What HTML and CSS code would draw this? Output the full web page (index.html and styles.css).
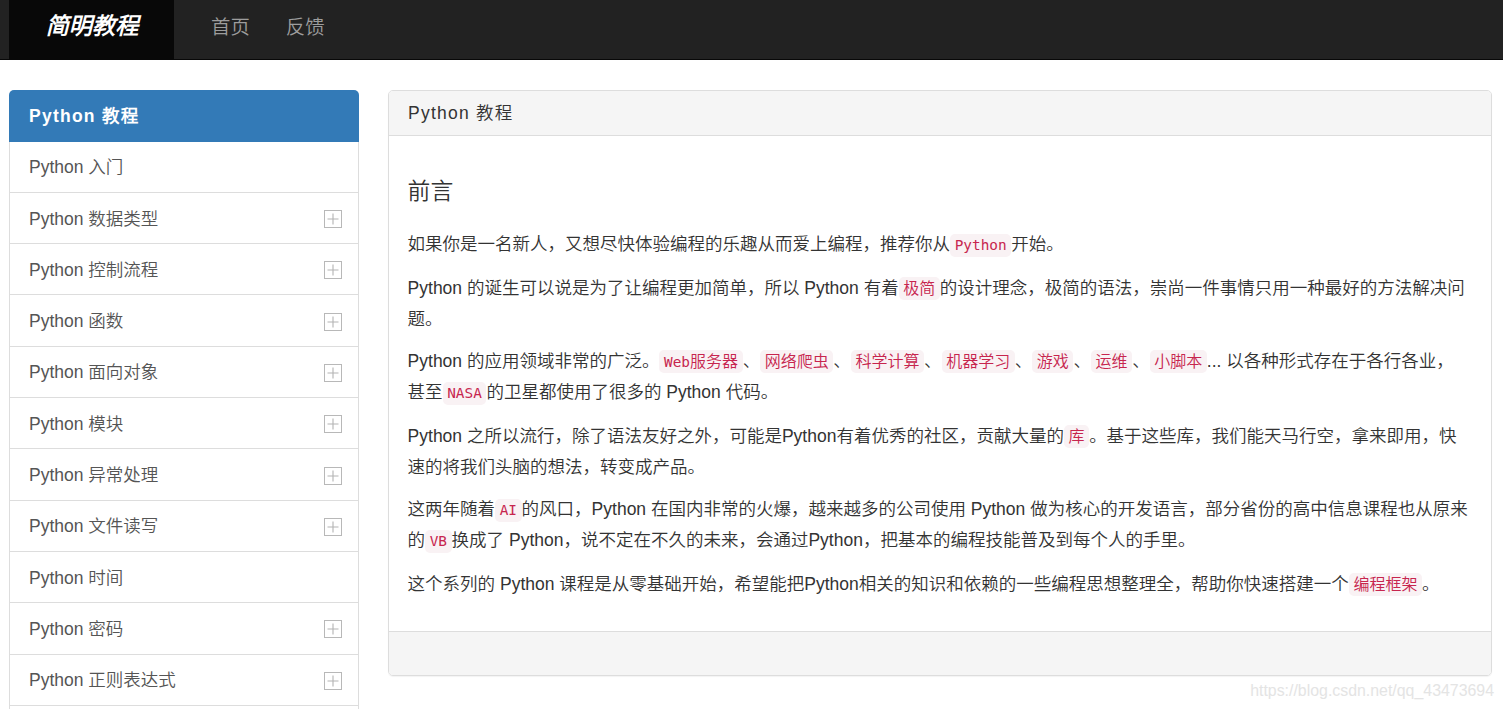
FILE: index.html
```
<!DOCTYPE html>
<html lang="zh-CN">

<head>
    <meta charset="UTF-8">
    <meta name="viewport" content="width=device-width, initial-scale=1.0">
    <title>Python 教程 - 简明教程</title>
    <link rel="stylesheet" href="styles.css">
</head>

<body>
    <svg class="symbols">
        <symbol id="plus" viewBox="0 0 18 18">
            <rect x="0.5" y="0.5" width="17" height="17" fill="none" stroke="#b8b8b8" />
            <path d="M3.5 9H14.5M9 3.5V14.5" fill="none" stroke="#b3b3b3" stroke-width="1.1" />
        </symbol>
    </svg>

    <nav class="navbar">
        <a class="brand">简明教程</a>
        <a class="nav-link">首页</a>
        <a class="nav-link">反馈</a>
    </nav>

    <div class="container">
        <div class="sidebar">
            <div class="item active">Python 教程</div>
            <div class="item">Python 入门</div>
            <div class="item">Python 数据类型<svg class="icon"><use href="#plus" /></svg></div>
            <div class="item">Python 控制流程<svg class="icon"><use href="#plus" /></svg></div>
            <div class="item">Python 函数<svg class="icon"><use href="#plus" /></svg></div>
            <div class="item">Python 面向对象<svg class="icon"><use href="#plus" /></svg></div>
            <div class="item">Python 模块<svg class="icon"><use href="#plus" /></svg></div>
            <div class="item">Python 异常处理<svg class="icon"><use href="#plus" /></svg></div>
            <div class="item">Python 文件读写<svg class="icon"><use href="#plus" /></svg></div>
            <div class="item">Python 时间</div>
            <div class="item">Python 密码<svg class="icon"><use href="#plus" /></svg></div>
            <div class="item">Python 正则表达式<svg class="icon"><use href="#plus" /></svg></div>
            <div class="item last"></div>
        </div>

        <div class="panel">
            <div class="panel-heading">Python 教程</div>
            <div class="panel-body">
                <h3>前言</h3>
                <p>如果你是一名新人，又想尽快体验编程的乐趣从而爱上编程，推荐你从<code>Python</code>开始。</p>
                <p class="close">Python 的诞生可以说是为了让编程更加简单，所以 Python 有着<code class="cn">极简</code>的设计理念，极简的语法，崇尚一件事情只用一种最好的方法解决问<br>题。</p>
                <p>Python 的应用领域非常的广泛。<code class="cn"><span class="en">Web</span>服务器</code>、<code class="cn">网络爬虫</code>、<code class="cn">科学计算</code>、<code class="cn">机器学习</code>、<code class="cn">游戏</code>、<code class="cn">运维</code>、<code class="cn">小脚本</code>... 以各种形式存在于各行各业，<br>甚至<code>NASA</code>的卫星都使用了很多的 Python 代码。</p>
                <p class="close">Python 之所以流行，除了语法友好之外，可能是Python有着优秀的社区，贡献大量的<code class="cn">库</code>。基于这些库，我们能天马行空，拿来即用，快<br>速的将我们头脑的想法，转变成产品。</p>
                <p>这两年随着<code>AI</code>的风口，Python 在国内非常的火爆，越来越多的公司使用 Python 做为核心的开发语言，部分省份的高中信息课程也从原来<br>的<code>VB</code>换成了 Python，说不定在不久的未来，会通过Python，把基本的编程技能普及到每个人的手里。</p>
                <p>这个系列的 Python 课程是从零基础开始，希望能把Python相关的知识和依赖的一些编程思想整理全，帮助你快速搭建一个<code class="cn">编程框架</code>。</p>
            </div>
            <div class="panel-footer"></div>
        </div>
    </div>

    <div class="watermark">https://blog.csdn.net/qq_43473694</div>
</body>

</html>
```

FILE: styles.css
```
* {
    box-sizing: border-box;
}

body {
    margin: 0;
    height: 709px;
    overflow: hidden;
    background: #fff;
    color: #333;
    font: 350 17.5px "Liberation Sans", "Noto Sans CJK SC DemiLight", "Noto Sans CJK SC", sans-serif;
}

.symbols {
    display: none;
}

.navbar {
    display: flex;
    height: 60px;
    padding-left: 9px;
    background: #222;
    border-bottom: 1px solid #080808;
}

.brand {
    width: 165px;
    margin-right: 19px;
    background: #080808;
    color: #fff;
    text-align: center;
    font-size: 23.2px;
    font-weight: 700;
    font-style: italic;
    line-height: 53px;
    padding-left: 1px;
}

.nav-link {
    padding: 0 18px;
    color: #9d9d9d;
    font-size: 19.4px;
    line-height: 55px;
}

.container {
    display: flex;
    align-items: flex-start;
    gap: 29px;
    padding: 30px 11px 0 9px;
}

.sidebar {
    width: 350px;
    flex: none;
}

.item {
    display: flex;
    align-items: center;
    justify-content: space-between;
    height: 51.3px;
    padding: 0 16px 2px 19px;
    border: 1px solid #ddd;
    border-top: 0;
    color: #555;
}

.item.active {
    height: 51.6px;
    padding-left: 20px;
    background: #337ab7;
    border: 0;
    border-radius: 5px 5px 0 0;
    color: #fff;
    font-weight: 700;
    letter-spacing: 1.25px;
}

.item.last {
    height: 3px;
    padding: 0;
    border-bottom: 0;
}

.icon {
    width: 18px;
    height: 18px;
    margin-top: 4px;
}

.panel {
    flex: 1;
    min-width: 0;
    border: 1px solid #ddd;
    border-radius: 5px;
    box-shadow: 0 1px 1px rgba(0, 0, 0, .05);
}

.panel-heading {
    height: 45px;
    padding-left: 19px;
    background: #f5f5f5;
    border-bottom: 1px solid #ddd;
    border-radius: 4px 4px 0 0;
    line-height: 44px;
    letter-spacing: 1.25px;
}

.panel-body {
    height: 495px;
    padding: 38px 0 0 18.6px;
    white-space: nowrap;
}

h3 {
    margin: 0 0 21px;
    font-size: 22.8px;
    font-weight: 350;
    line-height: 34px;
}

p {
    margin: 0 0 13px;
    font-size: 17.51px;
    line-height: 31px;
}

p.close {
    margin-bottom: 11px;
}

code {
    display: inline-block;
    height: 23px;
    padding: 0 4.6px;
    border-radius: 5px;
    background: #f9f2f4;
    color: #c7254e;
    font: 14.4px/23px "DejaVu Sans Mono", "Noto Sans CJK SC", monospace;
    vertical-align: middle;
}

code.cn {
    margin-top: -2px;
    font-family: "DejaVu Sans Mono", "Noto Sans CJK SC DemiLight", "Noto Sans CJK SC", monospace;
    font-size: 16px;
    font-weight: 350;
}

.en {
    font-size: 14.4px;
}

.panel-footer {
    height: 44px;
    background: #f5f5f5;
    border-top: 1px solid #ddd;
    border-radius: 0 0 4px 4px;
}

.watermark {
    position: absolute;
    right: 9px;
    bottom: 9px;
    color: #e4e4e4;
    font-size: 15.9px;
}
```
